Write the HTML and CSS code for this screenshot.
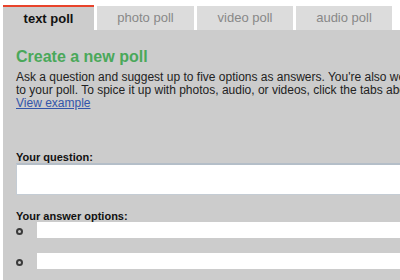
FILE: index.html
```html
<!DOCTYPE html>
<html>
<head>
<meta charset="utf-8">
<link rel="stylesheet" href="styles.css">
</head>
<body>
<div class="tabs">
  <div class="tab tab-active">text poll</div>
  <div class="tab tab-photo">photo poll</div>
  <div class="tab tab-video">video poll</div>
  <div class="tab tab-audio">audio poll</div>
</div>
<div class="panel">
  <h1 class="title">Create a new poll</h1>
  <p class="intro"><span class="line">Ask a question and suggest up to five options as answers. You're also welcome to add a short description</span><br><span class="line">to your poll. To spice it up with photos, audio, or videos, click the tabs above.</span><br><a class="link" href="#">View example</a></p>
  <div class="field-label label-question">Your question:</div>
  <div class="question-box"></div>
  <div class="field-label label-answers">Your answer options:</div>
  <ul class="options">
    <li class="option"><span class="bullet"></span><span class="answer-box"></span></li>
    <li class="option"><span class="bullet"></span><span class="answer-box"></span></li>
  </ul>
</div>
</body>
</html>
```

FILE: styles.css
```css
html, body {
  margin: 0;
  padding: 0;
  overflow: hidden;
  background: #ffffff;
}
body {
  width: 400px;
  height: 280px;
  padding: 5px 0 0 3px;
  box-sizing: border-box;
  font-family: "Liberation Sans", Arial, sans-serif;
}
.tabs {
  display: flex;
  align-items: flex-end;
  gap: 3px;
  height: 25px;
}
.tab {
  height: 24px;
  width: 96px;
  background: #dcdcdc;
  color: #888888;
  font-size: 13px;
  line-height: 24px;
  text-align: center;
  box-sizing: border-box;
}
.tab-active {
  width: 91px;
  height: 25px;
  border-top: 2px solid #e8432b;
  background: #cccccc;
  color: #111111;
  font-weight: bold;
  line-height: 23px;
}
.tab-photo { width: 97px; }
.panel {
  width: 700px;
  height: 260px;
  background: #cccccc;
  padding: 17px 0 0 13px;
  box-sizing: border-box;
}
.title {
  margin: 0;
  font-size: 16px;
  line-height: 19px;
  font-weight: bold;
  color: #4aa85a;
}
.intro {
  margin: 5px 0 0;
  font-size: 12px;
  line-height: 13px;
  color: #222222;
}
.line { white-space: nowrap; }
.link {
  color: #3355aa;
  text-decoration: underline;
}
.field-label {
  font-size: 11px;
  line-height: 11px;
  font-weight: bold;
  color: #111111;
}
.label-question { margin-top: 42px; }
.question-box {
  height: 32px;
  width: 600px;
  background: #ffffff;
  border: 1px solid #c4ccd4;
  border-top: 2px solid #b4bec8;
  box-sizing: border-box;
}
.label-answers { margin-top: 16px; }
.options {
  list-style: none;
  margin: 0;
  padding: 0;
  display: flex;
  flex-direction: column;
  gap: 15px;
}
.option {
  display: flex;
  align-items: center;
  height: 16px;
}
.bullet {
  width: 7px;
  height: 7px;
  border: 2px solid #3a3a3a;
  border-radius: 50%;
  background: #c8c8c8;
  box-sizing: border-box;
  margin: 2px 14px 0 0;
}
.answer-box {
  width: 600px;
  height: 16px;
  background: #ffffff;
}
```
